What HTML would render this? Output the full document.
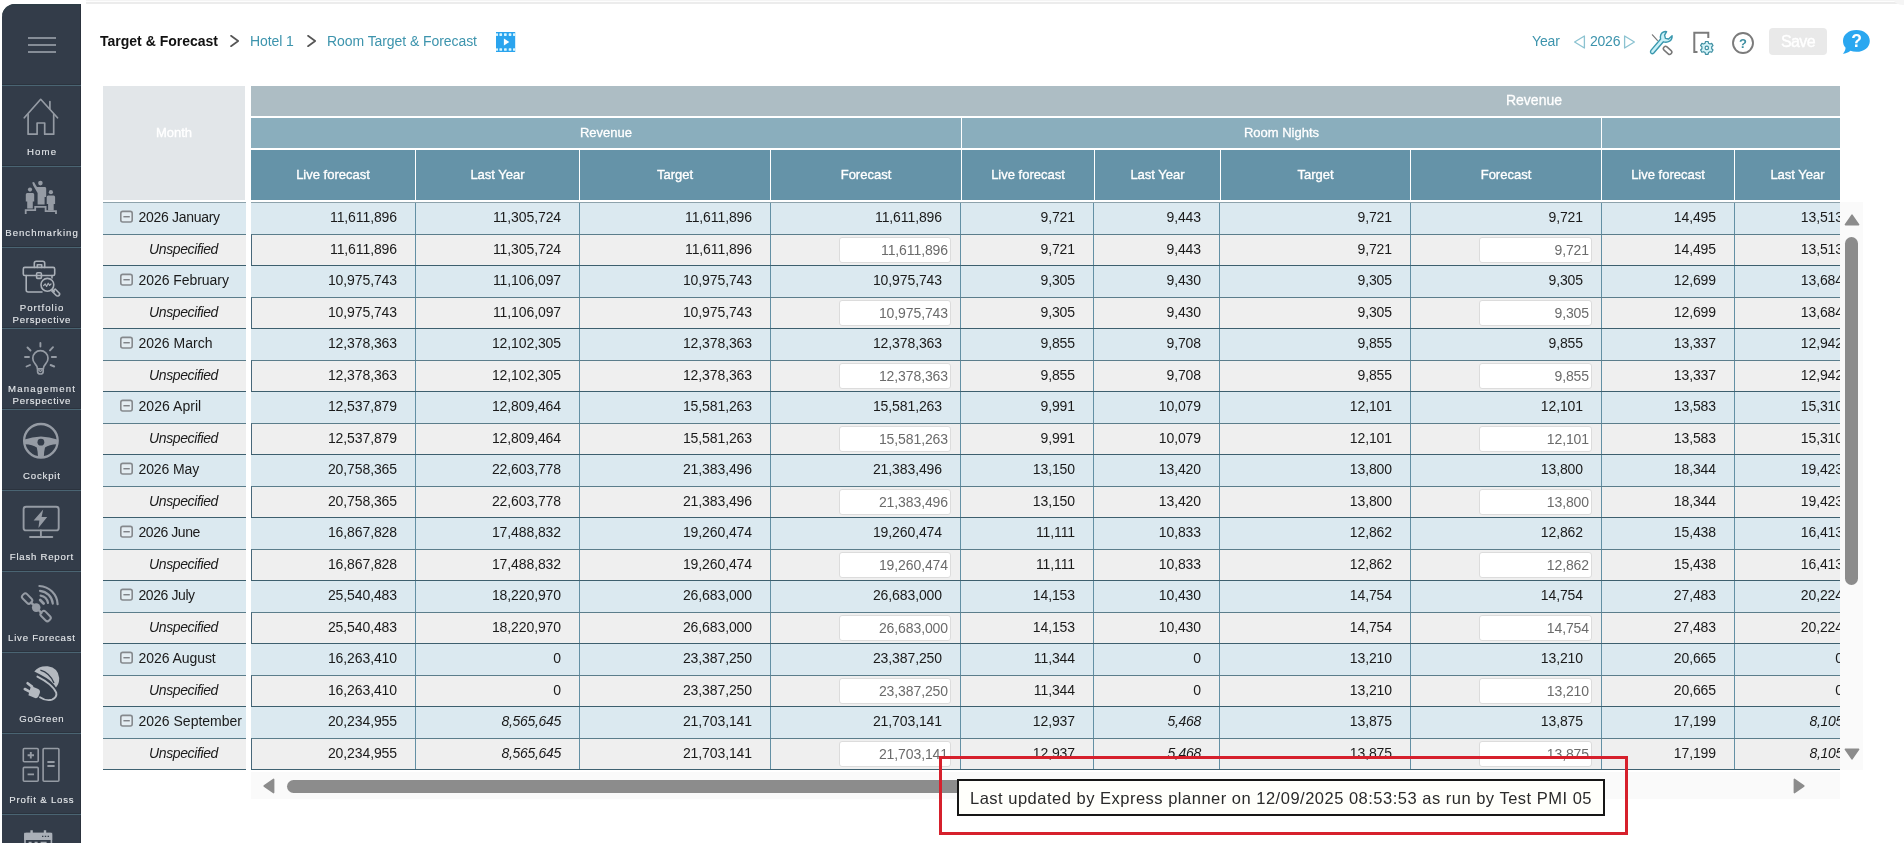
<!DOCTYPE html>
<html lang="en">
<head>
<meta charset="utf-8">
<title>Room Target &amp; Forecast</title>
<style>
*{box-sizing:border-box;margin:0;padding:0}
html,body{width:1904px;height:843px;overflow:hidden;background:#fff}
body{position:relative;will-change:transform;font-family:"Liberation Sans",sans-serif;font-size:14px;color:#1a1a1a}
.topline{position:absolute;left:86px;top:0;width:1818px;height:4px;background:linear-gradient(#f4f4f4 0,#f4f4f4 1.1px,#fdfdfd 1.3px,#fdfdfd 2px,#ececec 2.3px,#ececec 4px)}
.topcorner{position:absolute;left:1894px;top:0;width:10px;height:5px;background:#f5f5f5;border-bottom-left-radius:9px 5px}
/* ---------- sidebar ---------- */
.side{position:absolute;left:2px;top:4px;width:79px;height:839px;background:#333c49;border-top-left-radius:13px;overflow:hidden;box-shadow:inset -1px 0 0 #2c333e,inset 0 2px 0 #2f3d47}
.burger{position:absolute;left:26px;top:33px;width:28px;height:16px}
.burger i{position:absolute;left:0;width:28px;height:2px;background:#868d97}
.nav{position:absolute;left:0;width:79px;height:81px;border-top:1px solid #4a6472;box-shadow:0 -1px 0 #2b333e}
.nav svg{position:absolute;left:0;top:-1px}
.nav span{position:absolute;left:-10px;width:99px;text-align:center;font-size:9.6px;line-height:12px;letter-spacing:1px;color:#e4e7ea;white-space:nowrap;-webkit-text-stroke:.12px #e4e7ea}
/* ---------- top bar ---------- */
.crumb{position:absolute;top:31px;height:20px;line-height:20px;font-size:14px;white-space:nowrap}
.crumb.b{font-weight:bold;color:#111}
.crumb.l{color:#3d94ad}
.chev{position:absolute;top:34px}
.tb{position:absolute}
.year{position:absolute;top:31px;height:20px;line-height:20px;font-size:14px;color:#3d94ad;white-space:nowrap}
.save{position:absolute;left:1769px;top:28px;width:58px;height:27px;border-radius:4px;background:#e9e9e9;color:#fff;font-size:16px;line-height:28px;text-align:center;letter-spacing:-.6px;-webkit-text-stroke:.4px #fff}
/* ---------- table ---------- */
.monthhead{position:absolute;left:103px;top:86px;width:142px;height:114px;background:#e2e6e9;color:#fff;font-size:13px;text-align:center;line-height:93px;-webkit-text-stroke:.35px #fff}
.leftcol{position:absolute;left:103px;top:202px;width:143px;height:568px;overflow:hidden}
.lrow{position:absolute;left:0;width:143px;white-space:nowrap;font-size:14px}
.lrow.m{height:32px;border-top:1px solid #3d5f6e;background:#dbe9f0;line-height:29px}
.lrow.u{height:31px;border-top:1px solid #5b7d8b;background:#efefef;line-height:28px;font-style:italic}
.lrow.m span{position:absolute;left:35.5px;top:0}
.lrow.u span{position:absolute;left:46px;top:0;letter-spacing:-.38px}
.exp{position:absolute;left:16px;top:7px;width:15px;height:14px}
.lend{position:absolute;left:0;top:567px;width:143px;height:1px;background:#3f6272}
.grid{position:absolute;left:251px;top:86px;width:1589px;height:684px;overflow:hidden;background:#fff}
.h1{position:absolute;left:0;top:0;width:1589px;height:30px;background:#adbdc4;color:#fff;font-size:14px;line-height:29px;-webkit-text-stroke:.3px #fff}
.h1 span{position:absolute;top:0;transform:translateX(-50%);white-space:nowrap}
.h2{position:absolute;top:32px;height:30px;background:#8aaebd;color:#fff;font-size:13px;line-height:29px;text-align:center;white-space:nowrap;-webkit-text-stroke:.3px #fff}
.h3{position:absolute;top:64px;height:50px;background:#6593a8;color:#fff;font-size:13px;line-height:49px;text-align:center;white-space:nowrap;-webkit-text-stroke:.35px #fff}
.row{position:absolute;left:0;width:1609px;white-space:nowrap}
.row.m{height:32px;border-top:1px solid #3d5f6e;background:#dbe9f0;line-height:29px}
.row.u{height:31px;border-top:1px solid #5b7d8b;background:#efefef;line-height:28px;border-left:1px solid #47687a}
.c{position:absolute;top:0;height:100%;text-align:right;padding-right:18px;font-size:14px;color:#1a1a1a;letter-spacing:-.1px}
.row.u .c{margin-left:-1px}
.c.b{border-left:1px solid #6390a4}
.c em{font-style:italic;letter-spacing:-.3px}
.inp{position:absolute;left:68px;right:9px;top:2px;height:26px;border:1px solid #dcdcdc;border-radius:3px;background:#fff;color:#6b6b6b;line-height:24px;padding-right:2px;text-align:right}
.gend{position:absolute;left:0;top:683px;width:1589px;height:1px;background:#3f6272}
/* ---------- scrollbars ---------- */
.vscroll{position:absolute;left:1840px;top:202px;width:23px;height:568px;background:#fafafa}
.vscroll .up{position:absolute;left:4px;top:12px}
.vscroll .down{position:absolute;left:4px;top:546px}
.vthumb{position:absolute;left:5px;top:35px;width:13px;height:348px;border-radius:6.5px;background:#8c8c8c}
.hscroll{position:absolute;left:251px;top:772px;width:1589px;height:27px;background:#fafafa}
.hscroll .lft{position:absolute;left:12px;top:6px}
.hscroll .rgt{position:absolute;left:1542px;top:6px}
.hthumb{position:absolute;left:36px;top:8px;width:900px;height:13px;border-radius:6.5px;background:#8c8c8c}
/* ---------- tooltip ---------- */
.tooltip{position:absolute;left:957px;top:779px;width:648px;height:37px;border:2px solid #161616;background:#fffffb;color:#2a2a2a;font-size:16.5px;letter-spacing:.5px;line-height:35px;padding-left:11px;white-space:nowrap}
.redbox{position:absolute;left:939px;top:756px;width:689px;height:79px;border:3px solid #d6202c}

</style>
</head>
<body>
<div class="topline"></div><div class="topcorner"></div>
<div class="side">
<div class="burger"><i style="top:0"></i><i style="top:6.7px"></i><i style="top:13.5px"></i></div>
<div class="nav" style="top:81px">
<svg width="79" height="81" viewBox="0 0 79 81" fill="none" stroke="#959ba4" stroke-width="1.7" stroke-linecap="round" stroke-linejoin="round"><path d="M22.3 32.8 L38.7 14.3 L55.5 32.8"/><path d="M26.1 29.5 V49.2 H35.1 V38 H42.7 V49.2 H51.7 V29.5"/><path d="M47.9 16.7 V23.8"/></svg>
<span style="top:60px;letter-spacing:1.2px;padding-left:1.2px">Home</span></div>
<div class="nav" style="top:162px">
<svg width="79" height="81" viewBox="0 0 79 81" fill="#959ba4" stroke="none"><circle cx="38.4" cy="17.1" r="2.3"/><path d="M35 21 H43 Q44.2 21 44.2 22.5 V31 H42.6 V38.5 H35.6 V27 L31.2 19.5 L30.2 16.6 L32 16 L34 19.6 Z"/><circle cx="28" cy="23.6" r="2.1"/><path d="M25.2 27 H30.8 Q32.2 27 32.2 28.6 V35.5 H30.8 V42.4 H25.2 V35.5 H23.8 V28.6 Q23.8 27 25.2 27 Z"/><circle cx="48.9" cy="26.2" r="2.1"/><path d="M46.1 29.6 H51.7 Q53.1 29.6 53.1 31.2 V38 H51.7 V44.6 H46.1 V38 H44.7 V31.2 Q44.7 29.6 46.1 29.6 Z"/><path d="M23.7 48 V44.2 H33.2 V40.8 H43.6 V45.1 H54 V48" fill="none" stroke="#959ba4" stroke-width="1.8"/></svg>
<span style="top:60px;letter-spacing:1.02px;padding-left:1.02px">Benchmarking</span></div>
<div class="nav" style="top:243px">
<svg width="79" height="81" viewBox="0 0 79 81" fill="none" stroke="#aab0b8" stroke-width="1.6" stroke-linecap="round" stroke-linejoin="round"><rect x="21.3" y="20.4" width="31.4" height="8.1" rx="1.5"/><path d="M32.3 20.4 V16.3 Q32.3 14.3 34.3 14.3 H40.7 Q42.7 14.3 42.7 16.3 V20.4"/><path d="M35.3 20.4 V17.8 H39.7 V20.4"/><path d="M24.2 28.5 V43 Q24.2 45 26.2 45 H40"/><path d="M50 28.5 V31"/><rect x="34.6" y="25.7" width="4.8" height="5.7" rx="1"/><circle cx="45.4" cy="37.8" r="6.4" /><path d="M50.2 42.6 L52.2 44.6"/><path d="M51.6 43.6 L53.2 42 L57.4 46.2 Q58.2 47.8 56.6 48.8 Q55 49.4 54 48.2 L49.8 44 Z"/><path d="M41.6 38.6 L43.2 37 L44.6 39.4 L46.2 36.2 L47.6 38.4 L49 37" stroke-width="1.2"/></svg>
<span style="top:54px;letter-spacing:1.05px;padding-left:1.05px">Portfolio</span><span style="top:66px;letter-spacing:0.78px;padding-left:0.78px">Perspective</span></div>
<div class="nav" style="top:324px">
<svg width="79" height="81" viewBox="0 0 79 81" fill="none" stroke="#959ba4" stroke-width="1.7" stroke-linecap="round" stroke-linejoin="round"><path d="M35.4 40.8 Q35.2 38 33 35.6 A7.6 7.6 0 1 1 43.8 35.6 Q41.6 38 41.4 40.8 Z"/><path d="M35.6 41 V43.4 Q35.6 46 38.4 46 Q41.2 46 41.2 43.4 V41"/><path d="M36.8 42.2 L38.4 43.6 L40 42.2" stroke-width="1.2"/><path d="M38.4 15 V18.5 M25.5 19.5 L28.5 22.5 M51 19.2 L48 22.4 M23 29 H27 M49.8 29 H54 M24.5 38.5 L28 37 M48.6 37 L52.2 38.5" stroke-width="1.9"/></svg>
<span style="top:54px;letter-spacing:1.2px;padding-left:1.2px">Management</span><span style="top:66px;letter-spacing:0.78px;padding-left:0.78px">Perspective</span></div>
<div class="nav" style="top:405px">
<svg width="79" height="81" viewBox="0 0 79 81"><circle cx="38.9" cy="31.8" r="16.8" fill="none" stroke="#959ba4" stroke-width="2.3"/><path d="M22.6 30.4 Q30 28 38.9 27.6 Q47.8 28 55.2 30.4 L55 35.2 Q47 35.6 43 38.4 Q41.8 43 41.8 48.4 H36 Q36 43 34.8 38.4 Q30.8 35.6 22.8 35.2 Z" fill="#959ba4"/><circle cx="38.9" cy="33.2" r="3.4" fill="#333c49"/></svg>
<span style="top:60px;letter-spacing:0.83px;padding-left:0.83px">Cockpit</span></div>
<div class="nav" style="top:486px">
<svg width="79" height="81" viewBox="0 0 79 81" fill="none" stroke="#959ba4" stroke-width="1.9" stroke-linecap="round" stroke-linejoin="round"><rect x="21.6" y="16.7" width="35.1" height="23.7" rx="2.5"/><path d="M38.9 40.4 V47 M28 47 H50.3"/><path d="M41.2 19.6 L31.6 30.6 H37.4 L36.4 38 L45.2 27 H39.6 Z" fill="#959ba4" stroke="none"/></svg>
<span style="top:60px;letter-spacing:0.77px;padding-left:0.77px">Flash Report</span></div>
<div class="nav" style="top:567px">
<svg width="79" height="81" viewBox="0 0 79 81" fill="none" stroke="#959ba4" stroke-width="2" stroke-linecap="round" stroke-linejoin="round"><circle cx="34.2" cy="36.6" r="4.3" fill="#959ba4" stroke="none"/><rect x="-5.6" y="-3.1" width="11.2" height="6.2" rx="2.4" transform="translate(25.1 27.6) rotate(45)"/><rect x="-5.6" y="-3.1" width="11.2" height="6.2" rx="2.4" transform="translate(43.6 45.1) rotate(45)"/><path d="M29.2 31.6 L31.2 33.6 M37.4 39.8 L39.4 41.8" stroke-width="2.4"/><path d="M37.4 15 A19 19 0 0 1 55.6 33.2" stroke-width="2.2"/><path d="M38 19.8 A14 14 0 0 1 50.8 32.6" stroke-width="2.2"/><path d="M38.6 24.6 A9 9 0 0 1 46 32" stroke-width="2.2"/><path d="M38.2 29 L41.6 32.4" stroke-width="2.8"/></svg>
<span style="top:60px;letter-spacing:0.77px;padding-left:0.77px">Live Forecast</span></div>
<div class="nav" style="top:648px">
<svg width="79" height="81" viewBox="0 0 79 81"><path d="M32.3 19.6 Q36.6 13.6 45.8 14.2 Q56.4 15.8 57.2 26 Q57.4 31.6 54 35.6 Q50.6 29.8 44.4 26 Q38.4 22.6 32.3 19.6 Z" fill="#b4b9c0"/><path d="M38.4 18.2 Q47.6 20.8 52 31" fill="none" stroke="#333c49" stroke-width="1.3"/><path d="M35.4 24.6 Q43 28.4 47.6 32.4 Q52.6 36.8 54.2 40.6 Q55.4 45.4 50 47.6 Q44 49.4 38 45.2" fill="none" stroke="#b4b9c0" stroke-width="1.9" stroke-linecap="round"/><path d="M29 34 L36.2 37 Q38.6 38.4 37.8 41 L36.4 44.6 Q35.2 46.6 33 46 L26.4 43.2 Z" fill="#b4b9c0"/><path d="M30 34.6 L25.6 31.2 M27.6 39.6 L22.8 37" stroke="#b4b9c0" stroke-width="2.6" stroke-linecap="round"/></svg>
<span style="top:60px;letter-spacing:0.81px;padding-left:0.81px">GoGreen</span></div>
<div class="nav" style="top:729px">
<svg width="79" height="81" viewBox="0 0 79 81" fill="none" stroke="#959ba4" stroke-width="1.6" stroke-linejoin="round"><rect x="21.3" y="15.5" width="14.9" height="13.3" rx="1"/><rect x="21.3" y="34.4" width="14.9" height="13.8" rx="1"/><rect x="41.1" y="15.5" width="15.8" height="32.7" rx="1"/><path d="M25.6 22.2 H32 M28.8 19 V25.4 M25.6 41.4 H32 M45.4 29 H52.6 M45.4 33 H52.6" stroke-width="1.9"/></svg>
<span style="top:60px;letter-spacing:0.83px;padding-left:0.83px">Profit &amp; Loss</span></div>
<div class="nav" style="top:810px">
<svg width="79" height="81" viewBox="0 0 79 81" fill="none" stroke="#aab0b8" stroke-width="1.6"><rect x="23" y="19.6" width="26.4" height="24" rx="1"/><rect x="23" y="19.6" width="26.4" height="5.6" fill="#aab0b8"/><path d="M29.6 16.2 V20 M43 16.2 V20" stroke-width="2.4"/><path d="M40 22.4 h1.4 m1.4 0 h1.4 m1.4 0 h1.4" stroke="#333c49" stroke-width="1.4"/><path d="M26.6 28.6 h3 m3 0 h3 m3 0 h6" stroke-width="1.6"/></svg>
</div>
</div>
<div class="crumb b" style="left:100px">Target &amp; Forecast</div>
<svg class="chev" style="left:229px" width="11" height="14" viewBox="0 0 11 14" fill="none" stroke="#555" stroke-width="1.7" stroke-linecap="round" stroke-linejoin="round"><path d="M2 1.8 L9.2 7 L2 12.2"/></svg>
<div class="crumb l" style="left:250px;letter-spacing:-.1px">Hotel 1</div>
<svg class="chev" style="left:306px" width="11" height="14" viewBox="0 0 11 14" fill="none" stroke="#555" stroke-width="1.7" stroke-linecap="round" stroke-linejoin="round"><path d="M2 1.8 L9.2 7 L2 12.2"/></svg>
<div class="crumb l" style="left:327px;letter-spacing:-.07px">Room Target &amp; Forecast</div>
<svg class="tb" style="left:496px;top:32px" width="20" height="20" viewBox="0 0 20 20"><rect x="0" y="0" width="19.2" height="20" fill="#2aa4ee"/><g fill="#d9f6ff"><rect x="0" y="1.3" width="2" height="2.6" rx=".6"/><rect x="3.4" y="1.3" width="2.7" height="2.6" rx=".6"/><rect x="8" y="1.3" width="2.7" height="2.6" rx=".6"/><rect x="12.7" y="1.3" width="2.7" height="2.6" rx=".6"/><rect x="17" y="1.3" width="2.2" height="2.6" rx=".6"/><rect x="0" y="16.2" width="2" height="2.6" rx=".6"/><rect x="3.4" y="16.2" width="2.7" height="2.6" rx=".6"/><rect x="8" y="16.2" width="2.7" height="2.6" rx=".6"/><rect x="12.7" y="16.2" width="2.7" height="2.6" rx=".6"/><rect x="17" y="16.2" width="2.2" height="2.6" rx=".6"/></g><path d="M7.9 6.5 L13.3 10 L7.9 13.5 Z" fill="#fff"/></svg>
<div class="year" style="left:1532px;letter-spacing:-.15px">Year</div>
<svg class="tb" style="left:1573px;top:35px" width="13" height="14" viewBox="0 0 13 14" fill="none" stroke="#8cc3d1" stroke-width="1.3" stroke-linejoin="round"><path d="M11.4 1 V13 L1.6 7 Z"/></svg>
<div class="year" style="left:1590px;letter-spacing:-.24px">2026</div>
<svg class="tb" style="left:1623px;top:35px" width="13" height="14" viewBox="0 0 13 14" fill="none" stroke="#8cc3d1" stroke-width="1.3" stroke-linejoin="round"><path d="M1.6 1 V13 L11.4 7 Z"/></svg>
<svg class="tb" style="left:1648px;top:29px" width="28" height="28" viewBox="0 0 28 28" fill="none" stroke-linecap="round" stroke-linejoin="round"><path d="M4.4 5.8 L9.4 11.4" stroke="#777" stroke-width="1.2"/><rect x="-4.8" y="-2.2" width="9.6" height="4.4" rx="2" transform="translate(19.6 21.4) rotate(42)" stroke="#777" stroke-width="1.5" fill="#fff"/><path d="M18.6 2.6 Q14.4 2.2 12.8 5.8 Q12 8 12.6 10 L2.9 21.4 Q1.9 23 3.1 24.2 Q4.4 25.3 5.8 24 L15.4 12.8 Q18.8 13.9 21.6 12.2 Q24.3 10.4 24.1 6.8 L20.6 10 L17.4 9.4 L16.6 6.2 Z" stroke="#3a98ae" stroke-width="1.4" fill="#c9f1f8"/></svg>
<svg class="tb" style="left:1692px;top:30px" width="26" height="26" viewBox="0 0 26 26" fill="none"><path d="M16.3 8 V2.7 H2.3 V21.9 H5.5" stroke="#7b7b7b" stroke-width="2"/><g transform="translate(14.8 17.9)"><path d="M-1.3 -6.4 H1.3 L1.7 -4.7 L3.2 -3.9 L4.9 -4.5 L6.2 -2.3 L4.9 -1.1 V0.9 L6.2 2.1 L4.9 4.4 L3.2 3.8 L1.7 4.7 L1.3 6.4 H-1.3 L-1.7 4.7 L-3.2 3.8 L-4.9 4.4 L-6.2 2.1 L-4.9 0.9 V-1.1 L-6.2 -2.3 L-4.9 -4.5 L-3.2 -3.9 L-1.7 -4.7 Z" fill="#d4f3f8" stroke="#3f8fa2" stroke-width="1.2" stroke-linejoin="round"/><circle cx="0" cy="0" r="1.7" fill="#fff" stroke="#3f8fa2" stroke-width="1.2"/></g></svg>
<svg class="tb" style="left:1731px;top:31px" width="24" height="24" viewBox="0 0 24 24" fill="none"><circle cx="12" cy="12" r="10" stroke="#7b7b7b" stroke-width="1.9"/><text x="12" y="16.6" text-anchor="middle" font-family="Liberation Sans, sans-serif" font-size="13" font-weight="bold" fill="#3f8fa2" stroke="none">?</text></svg>
<div class="save">Save</div>
<svg class="tb" style="left:1841px;top:29px" width="30" height="26" viewBox="0 0 30 26"><path d="M15.4 1 C23.2 1 28.8 5.8 28.8 11.9 C28.8 18 23.2 22.8 15.4 22.8 C13.2 22.8 11.2 22.5 9.4 21.8 C7.4 23.6 4.8 24.6 1.8 24.8 C3.4 23.2 4.4 21.2 4.6 18.8 C2.8 16.9 2 14.4 2 11.9 C2 5.8 7.6 1 15.4 1 Z" fill="#2aa7f0"/><text x="15.6" y="18.4" text-anchor="middle" font-family="Liberation Sans, sans-serif" font-size="17.5" font-weight="bold" fill="#fff">?</text></svg>
<div class="monthhead"><span>Month</span></div>
<div class="leftcol">
<div class="lrow m" style="top:0px;border-top-color:#8da2ab"><svg class="exp" viewBox="0 0 15 14"><rect x="1.8" y="1.4" width="11.4" height="10.6" rx="2" fill="#e4edf2" stroke="#85898d" stroke-width="1.6"/><path d="M4.4 6.75 H10.8" stroke="#74787c" stroke-width="1.3"/></svg><span style="letter-spacing:-0.3px">2026 January</span></div>
<div class="lrow u" style="top:32px"><span>Unspecified</span></div>
<div class="lrow m" style="top:63px"><svg class="exp" viewBox="0 0 15 14"><rect x="1.8" y="1.4" width="11.4" height="10.6" rx="2" fill="#e4edf2" stroke="#85898d" stroke-width="1.6"/><path d="M4.4 6.75 H10.8" stroke="#74787c" stroke-width="1.3"/></svg><span style="letter-spacing:-0.05px">2026 February</span></div>
<div class="lrow u" style="top:95px"><span>Unspecified</span></div>
<div class="lrow m" style="top:126px"><svg class="exp" viewBox="0 0 15 14"><rect x="1.8" y="1.4" width="11.4" height="10.6" rx="2" fill="#e4edf2" stroke="#85898d" stroke-width="1.6"/><path d="M4.4 6.75 H10.8" stroke="#74787c" stroke-width="1.3"/></svg><span style="letter-spacing:0px">2026 March</span></div>
<div class="lrow u" style="top:158px"><span>Unspecified</span></div>
<div class="lrow m" style="top:189px"><svg class="exp" viewBox="0 0 15 14"><rect x="1.8" y="1.4" width="11.4" height="10.6" rx="2" fill="#e4edf2" stroke="#85898d" stroke-width="1.6"/><path d="M4.4 6.75 H10.8" stroke="#74787c" stroke-width="1.3"/></svg><span style="letter-spacing:0.05px">2026 April</span></div>
<div class="lrow u" style="top:221px"><span>Unspecified</span></div>
<div class="lrow m" style="top:252px"><svg class="exp" viewBox="0 0 15 14"><rect x="1.8" y="1.4" width="11.4" height="10.6" rx="2" fill="#e4edf2" stroke="#85898d" stroke-width="1.6"/><path d="M4.4 6.75 H10.8" stroke="#74787c" stroke-width="1.3"/></svg><span style="letter-spacing:-0.1px">2026 May</span></div>
<div class="lrow u" style="top:284px"><span>Unspecified</span></div>
<div class="lrow m" style="top:315px"><svg class="exp" viewBox="0 0 15 14"><rect x="1.8" y="1.4" width="11.4" height="10.6" rx="2" fill="#e4edf2" stroke="#85898d" stroke-width="1.6"/><path d="M4.4 6.75 H10.8" stroke="#74787c" stroke-width="1.3"/></svg><span style="letter-spacing:-0.45px">2026 June</span></div>
<div class="lrow u" style="top:347px"><span>Unspecified</span></div>
<div class="lrow m" style="top:378px"><svg class="exp" viewBox="0 0 15 14"><rect x="1.8" y="1.4" width="11.4" height="10.6" rx="2" fill="#e4edf2" stroke="#85898d" stroke-width="1.6"/><path d="M4.4 6.75 H10.8" stroke="#74787c" stroke-width="1.3"/></svg><span style="letter-spacing:-0.42px">2026 July</span></div>
<div class="lrow u" style="top:410px"><span>Unspecified</span></div>
<div class="lrow m" style="top:441px"><svg class="exp" viewBox="0 0 15 14"><rect x="1.8" y="1.4" width="11.4" height="10.6" rx="2" fill="#e4edf2" stroke="#85898d" stroke-width="1.6"/><path d="M4.4 6.75 H10.8" stroke="#74787c" stroke-width="1.3"/></svg><span style="letter-spacing:-0.06px">2026 August</span></div>
<div class="lrow u" style="top:473px"><span>Unspecified</span></div>
<div class="lrow m" style="top:504px"><svg class="exp" viewBox="0 0 15 14"><rect x="1.8" y="1.4" width="11.4" height="10.6" rx="2" fill="#e4edf2" stroke="#85898d" stroke-width="1.6"/><path d="M4.4 6.75 H10.8" stroke="#74787c" stroke-width="1.3"/></svg><span style="letter-spacing:0px">2026 September</span></div>
<div class="lrow u" style="top:536px"><span>Unspecified</span></div>
<div class="lend"></div>
</div>
<div class="grid">
<div class="h1"><span style="left:1283px">Revenue</span></div>
<div class="h2" style="left:0px;width:710px">Revenue</div>
<div class="h2" style="left:711px;width:639px">Room Nights</div>
<div class="h2" style="left:1351px;width:258px"></div>
<div class="h3" style="left:0px;width:164px">Live forecast</div>
<div class="h3" style="left:165px;width:163px">Last Year</div>
<div class="h3" style="left:329px;width:190px">Target</div>
<div class="h3" style="left:520px;width:190px">Forecast</div>
<div class="h3" style="left:711px;width:132px">Live forecast</div>
<div class="h3" style="left:844px;width:125px">Last Year</div>
<div class="h3" style="left:970px;width:189px">Target</div>
<div class="h3" style="left:1160px;width:190px">Forecast</div>
<div class="h3" style="left:1351px;width:132px">Live forecast</div>
<div class="h3" style="left:1484px;width:125px">Last Year</div>
<div class="row m" style="top:116px;border-top-color:#8da2ab"><div class="c" style="left:0px;width:164px">11,611,896</div><div class="c b" style="left:164px;width:164px">11,305,724</div><div class="c b" style="left:328px;width:191px">11,611,896</div><div class="c b" style="left:519px;width:190px">11,611,896</div><div class="c b" style="left:709px;width:133px">9,721</div><div class="c b" style="left:842px;width:126px">9,443</div><div class="c b" style="left:968px;width:191px">9,721</div><div class="c b" style="left:1159px;width:191px">9,721</div><div class="c b" style="left:1350px;width:133px">14,495</div><div class="c b" style="left:1483px;width:127px">13,513</div></div>
<div class="row u" style="top:148px"><div class="c" style="left:0px;width:164px">11,611,896</div><div class="c b" style="left:164px;width:164px">11,305,724</div><div class="c b" style="left:328px;width:191px">11,611,896</div><div class="c b" style="left:519px;width:190px"><span class="inp">11,611,896</span></div><div class="c b" style="left:709px;width:133px">9,721</div><div class="c b" style="left:842px;width:126px">9,443</div><div class="c b" style="left:968px;width:191px">9,721</div><div class="c b" style="left:1159px;width:191px"><span class="inp">9,721</span></div><div class="c b" style="left:1350px;width:133px">14,495</div><div class="c b" style="left:1483px;width:127px">13,513</div></div>
<div class="row m" style="top:179px"><div class="c" style="left:0px;width:164px">10,975,743</div><div class="c b" style="left:164px;width:164px">11,106,097</div><div class="c b" style="left:328px;width:191px">10,975,743</div><div class="c b" style="left:519px;width:190px">10,975,743</div><div class="c b" style="left:709px;width:133px">9,305</div><div class="c b" style="left:842px;width:126px">9,430</div><div class="c b" style="left:968px;width:191px">9,305</div><div class="c b" style="left:1159px;width:191px">9,305</div><div class="c b" style="left:1350px;width:133px">12,699</div><div class="c b" style="left:1483px;width:127px">13,684</div></div>
<div class="row u" style="top:211px"><div class="c" style="left:0px;width:164px">10,975,743</div><div class="c b" style="left:164px;width:164px">11,106,097</div><div class="c b" style="left:328px;width:191px">10,975,743</div><div class="c b" style="left:519px;width:190px"><span class="inp">10,975,743</span></div><div class="c b" style="left:709px;width:133px">9,305</div><div class="c b" style="left:842px;width:126px">9,430</div><div class="c b" style="left:968px;width:191px">9,305</div><div class="c b" style="left:1159px;width:191px"><span class="inp">9,305</span></div><div class="c b" style="left:1350px;width:133px">12,699</div><div class="c b" style="left:1483px;width:127px">13,684</div></div>
<div class="row m" style="top:242px"><div class="c" style="left:0px;width:164px">12,378,363</div><div class="c b" style="left:164px;width:164px">12,102,305</div><div class="c b" style="left:328px;width:191px">12,378,363</div><div class="c b" style="left:519px;width:190px">12,378,363</div><div class="c b" style="left:709px;width:133px">9,855</div><div class="c b" style="left:842px;width:126px">9,708</div><div class="c b" style="left:968px;width:191px">9,855</div><div class="c b" style="left:1159px;width:191px">9,855</div><div class="c b" style="left:1350px;width:133px">13,337</div><div class="c b" style="left:1483px;width:127px">12,942</div></div>
<div class="row u" style="top:274px"><div class="c" style="left:0px;width:164px">12,378,363</div><div class="c b" style="left:164px;width:164px">12,102,305</div><div class="c b" style="left:328px;width:191px">12,378,363</div><div class="c b" style="left:519px;width:190px"><span class="inp">12,378,363</span></div><div class="c b" style="left:709px;width:133px">9,855</div><div class="c b" style="left:842px;width:126px">9,708</div><div class="c b" style="left:968px;width:191px">9,855</div><div class="c b" style="left:1159px;width:191px"><span class="inp">9,855</span></div><div class="c b" style="left:1350px;width:133px">13,337</div><div class="c b" style="left:1483px;width:127px">12,942</div></div>
<div class="row m" style="top:305px"><div class="c" style="left:0px;width:164px">12,537,879</div><div class="c b" style="left:164px;width:164px">12,809,464</div><div class="c b" style="left:328px;width:191px">15,581,263</div><div class="c b" style="left:519px;width:190px">15,581,263</div><div class="c b" style="left:709px;width:133px">9,991</div><div class="c b" style="left:842px;width:126px">10,079</div><div class="c b" style="left:968px;width:191px">12,101</div><div class="c b" style="left:1159px;width:191px">12,101</div><div class="c b" style="left:1350px;width:133px">13,583</div><div class="c b" style="left:1483px;width:127px">15,310</div></div>
<div class="row u" style="top:337px"><div class="c" style="left:0px;width:164px">12,537,879</div><div class="c b" style="left:164px;width:164px">12,809,464</div><div class="c b" style="left:328px;width:191px">15,581,263</div><div class="c b" style="left:519px;width:190px"><span class="inp">15,581,263</span></div><div class="c b" style="left:709px;width:133px">9,991</div><div class="c b" style="left:842px;width:126px">10,079</div><div class="c b" style="left:968px;width:191px">12,101</div><div class="c b" style="left:1159px;width:191px"><span class="inp">12,101</span></div><div class="c b" style="left:1350px;width:133px">13,583</div><div class="c b" style="left:1483px;width:127px">15,310</div></div>
<div class="row m" style="top:368px"><div class="c" style="left:0px;width:164px">20,758,365</div><div class="c b" style="left:164px;width:164px">22,603,778</div><div class="c b" style="left:328px;width:191px">21,383,496</div><div class="c b" style="left:519px;width:190px">21,383,496</div><div class="c b" style="left:709px;width:133px">13,150</div><div class="c b" style="left:842px;width:126px">13,420</div><div class="c b" style="left:968px;width:191px">13,800</div><div class="c b" style="left:1159px;width:191px">13,800</div><div class="c b" style="left:1350px;width:133px">18,344</div><div class="c b" style="left:1483px;width:127px">19,423</div></div>
<div class="row u" style="top:400px"><div class="c" style="left:0px;width:164px">20,758,365</div><div class="c b" style="left:164px;width:164px">22,603,778</div><div class="c b" style="left:328px;width:191px">21,383,496</div><div class="c b" style="left:519px;width:190px"><span class="inp">21,383,496</span></div><div class="c b" style="left:709px;width:133px">13,150</div><div class="c b" style="left:842px;width:126px">13,420</div><div class="c b" style="left:968px;width:191px">13,800</div><div class="c b" style="left:1159px;width:191px"><span class="inp">13,800</span></div><div class="c b" style="left:1350px;width:133px">18,344</div><div class="c b" style="left:1483px;width:127px">19,423</div></div>
<div class="row m" style="top:431px"><div class="c" style="left:0px;width:164px">16,867,828</div><div class="c b" style="left:164px;width:164px">17,488,832</div><div class="c b" style="left:328px;width:191px">19,260,474</div><div class="c b" style="left:519px;width:190px">19,260,474</div><div class="c b" style="left:709px;width:133px">11,111</div><div class="c b" style="left:842px;width:126px">10,833</div><div class="c b" style="left:968px;width:191px">12,862</div><div class="c b" style="left:1159px;width:191px">12,862</div><div class="c b" style="left:1350px;width:133px">15,438</div><div class="c b" style="left:1483px;width:127px">16,413</div></div>
<div class="row u" style="top:463px"><div class="c" style="left:0px;width:164px">16,867,828</div><div class="c b" style="left:164px;width:164px">17,488,832</div><div class="c b" style="left:328px;width:191px">19,260,474</div><div class="c b" style="left:519px;width:190px"><span class="inp">19,260,474</span></div><div class="c b" style="left:709px;width:133px">11,111</div><div class="c b" style="left:842px;width:126px">10,833</div><div class="c b" style="left:968px;width:191px">12,862</div><div class="c b" style="left:1159px;width:191px"><span class="inp">12,862</span></div><div class="c b" style="left:1350px;width:133px">15,438</div><div class="c b" style="left:1483px;width:127px">16,413</div></div>
<div class="row m" style="top:494px"><div class="c" style="left:0px;width:164px">25,540,483</div><div class="c b" style="left:164px;width:164px">18,220,970</div><div class="c b" style="left:328px;width:191px">26,683,000</div><div class="c b" style="left:519px;width:190px">26,683,000</div><div class="c b" style="left:709px;width:133px">14,153</div><div class="c b" style="left:842px;width:126px">10,430</div><div class="c b" style="left:968px;width:191px">14,754</div><div class="c b" style="left:1159px;width:191px">14,754</div><div class="c b" style="left:1350px;width:133px">27,483</div><div class="c b" style="left:1483px;width:127px">20,224</div></div>
<div class="row u" style="top:526px"><div class="c" style="left:0px;width:164px">25,540,483</div><div class="c b" style="left:164px;width:164px">18,220,970</div><div class="c b" style="left:328px;width:191px">26,683,000</div><div class="c b" style="left:519px;width:190px"><span class="inp">26,683,000</span></div><div class="c b" style="left:709px;width:133px">14,153</div><div class="c b" style="left:842px;width:126px">10,430</div><div class="c b" style="left:968px;width:191px">14,754</div><div class="c b" style="left:1159px;width:191px"><span class="inp">14,754</span></div><div class="c b" style="left:1350px;width:133px">27,483</div><div class="c b" style="left:1483px;width:127px">20,224</div></div>
<div class="row m" style="top:557px"><div class="c" style="left:0px;width:164px">16,263,410</div><div class="c b" style="left:164px;width:164px">0</div><div class="c b" style="left:328px;width:191px">23,387,250</div><div class="c b" style="left:519px;width:190px">23,387,250</div><div class="c b" style="left:709px;width:133px">11,344</div><div class="c b" style="left:842px;width:126px">0</div><div class="c b" style="left:968px;width:191px">13,210</div><div class="c b" style="left:1159px;width:191px">13,210</div><div class="c b" style="left:1350px;width:133px">20,665</div><div class="c b" style="left:1483px;width:127px">0</div></div>
<div class="row u" style="top:589px"><div class="c" style="left:0px;width:164px">16,263,410</div><div class="c b" style="left:164px;width:164px">0</div><div class="c b" style="left:328px;width:191px">23,387,250</div><div class="c b" style="left:519px;width:190px"><span class="inp">23,387,250</span></div><div class="c b" style="left:709px;width:133px">11,344</div><div class="c b" style="left:842px;width:126px">0</div><div class="c b" style="left:968px;width:191px">13,210</div><div class="c b" style="left:1159px;width:191px"><span class="inp">13,210</span></div><div class="c b" style="left:1350px;width:133px">20,665</div><div class="c b" style="left:1483px;width:127px">0</div></div>
<div class="row m" style="top:620px"><div class="c" style="left:0px;width:164px">20,234,955</div><div class="c b" style="left:164px;width:164px"><em>8,565,645</em></div><div class="c b" style="left:328px;width:191px">21,703,141</div><div class="c b" style="left:519px;width:190px">21,703,141</div><div class="c b" style="left:709px;width:133px">12,937</div><div class="c b" style="left:842px;width:126px"><em>5,468</em></div><div class="c b" style="left:968px;width:191px">13,875</div><div class="c b" style="left:1159px;width:191px">13,875</div><div class="c b" style="left:1350px;width:133px">17,199</div><div class="c b" style="left:1483px;width:127px"><em>8,105</em></div></div>
<div class="row u" style="top:652px"><div class="c" style="left:0px;width:164px">20,234,955</div><div class="c b" style="left:164px;width:164px"><em>8,565,645</em></div><div class="c b" style="left:328px;width:191px">21,703,141</div><div class="c b" style="left:519px;width:190px"><span class="inp">21,703,141</span></div><div class="c b" style="left:709px;width:133px">12,937</div><div class="c b" style="left:842px;width:126px"><em>5,468</em></div><div class="c b" style="left:968px;width:191px">13,875</div><div class="c b" style="left:1159px;width:191px"><span class="inp">13,875</span></div><div class="c b" style="left:1350px;width:133px">17,199</div><div class="c b" style="left:1483px;width:127px"><em>8,105</em></div></div>
<div class="gend"></div>
</div>
<div class="vscroll"><svg class="up" width="16" height="12" viewBox="0 0 16 12"><path d="M8 1.2 L14.6 10.6 H1.4 Z" fill="#8c8c8c" stroke="#8c8c8c" stroke-width="1.6" stroke-linejoin="round"/></svg><div class="vthumb"></div><svg class="down" width="16" height="12" viewBox="0 0 16 12"><path d="M8 10.8 L14.6 1.4 H1.4 Z" fill="#8c8c8c" stroke="#8c8c8c" stroke-width="1.6" stroke-linejoin="round"/></svg></div>
<div class="hscroll"><svg class="lft" width="12" height="16" viewBox="0 0 12 16"><path d="M1.2 8 L10.6 1.4 V14.6 Z" fill="#8c8c8c" stroke="#8c8c8c" stroke-width="1.6" stroke-linejoin="round"/></svg><div class="hthumb"></div><svg class="rgt" width="12" height="16" viewBox="0 0 12 16"><path d="M10.8 8 L1.4 1.4 V14.6 Z" fill="#8c8c8c" stroke="#8c8c8c" stroke-width="1.6" stroke-linejoin="round"/></svg></div>
<div class="tooltip">Last updated by Express planner on 12/09/2025 08:53:53 as run by Test PMI 05</div>
<div class="redbox"></div>
</body>
</html>
